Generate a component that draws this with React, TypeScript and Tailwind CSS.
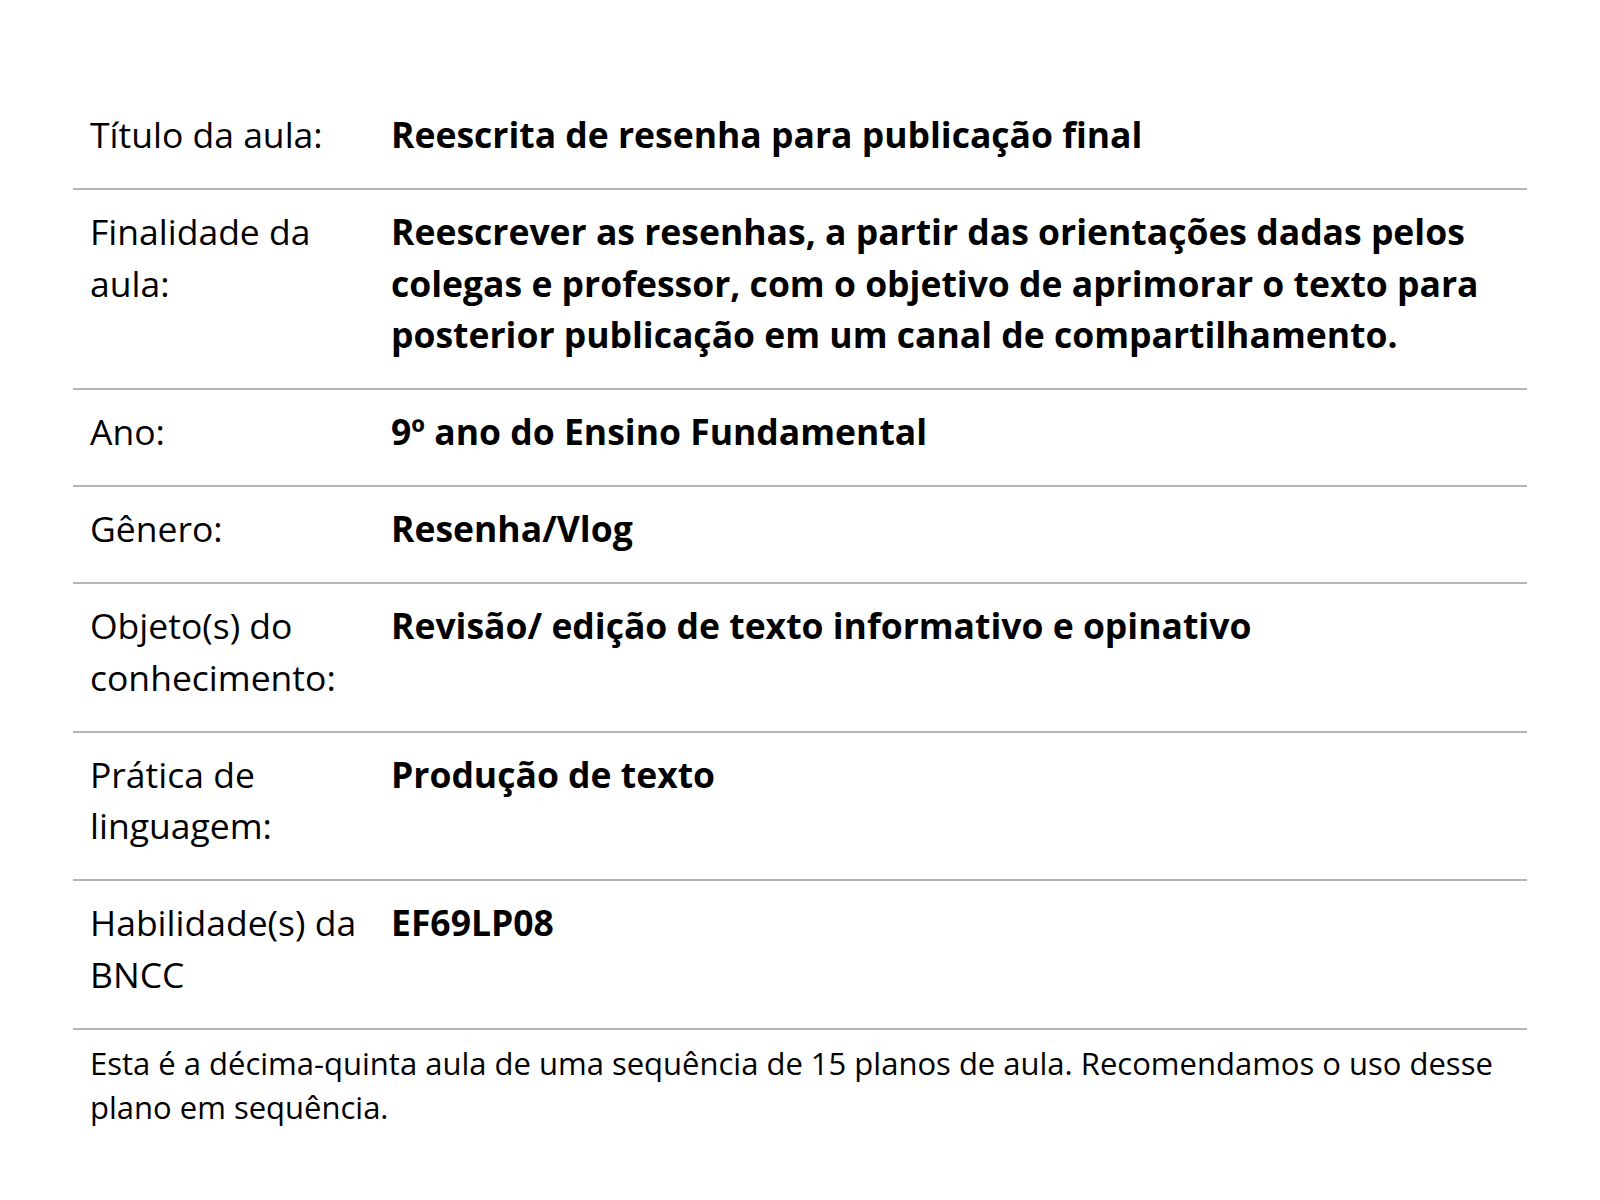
const rows: { label: string; value: string }[] = [
  { label: 'Título da aula:', value: 'Reescrita de resenha para publicação final' },
  {
    label: 'Finalidade da aula:',
    value:
      'Reescrever as resenhas, a partir das orientações dadas pelos colegas e professor, com o objetivo de aprimorar o texto para posterior publicação em um canal de compartilhamento.',
  },
  { label: 'Ano:', value: '9º ano do Ensino Fundamental' },
  { label: 'Gênero:', value: 'Resenha/Vlog' },
  { label: 'Objeto(s) do conhecimento:', value: 'Revisão/ edição de texto informativo e opinativo' },
  { label: 'Prática de linguagem:', value: 'Produção de texto' },
  { label: 'Habilidade(s) da BNCC', value: 'EF69LP08' },
];

export default function App() {
  return (
    <div
      className="min-h-screen bg-white text-black px-[73px] pt-[93px]"
      style={{ fontFamily: '"Open Sans", "Noto Sans", sans-serif' }}
    >
      <div className="w-[1454px]">
        {rows.map((row) => (
          <div key={row.label} className="flex border-b-2 border-[#b4b4b4] text-[35.5px] leading-[51.5px]">
            <div className="w-[302px] shrink-0 pl-[17px] pr-1 pt-4 pb-[27.5px] font-normal">{row.label}</div>
            <div className="flex-1 pl-4 pr-4 pt-4 pb-[27.5px] font-bold">{row.value}</div>
          </div>
        ))}
        <p className="pl-[17px] pr-4 pt-[11px] text-[31px] leading-[44px]">
          Esta é a décima-quinta aula de uma sequência de 15 planos de aula. Recomendamos o uso desse plano em sequência.
        </p>
      </div>
    </div>
  );
}
